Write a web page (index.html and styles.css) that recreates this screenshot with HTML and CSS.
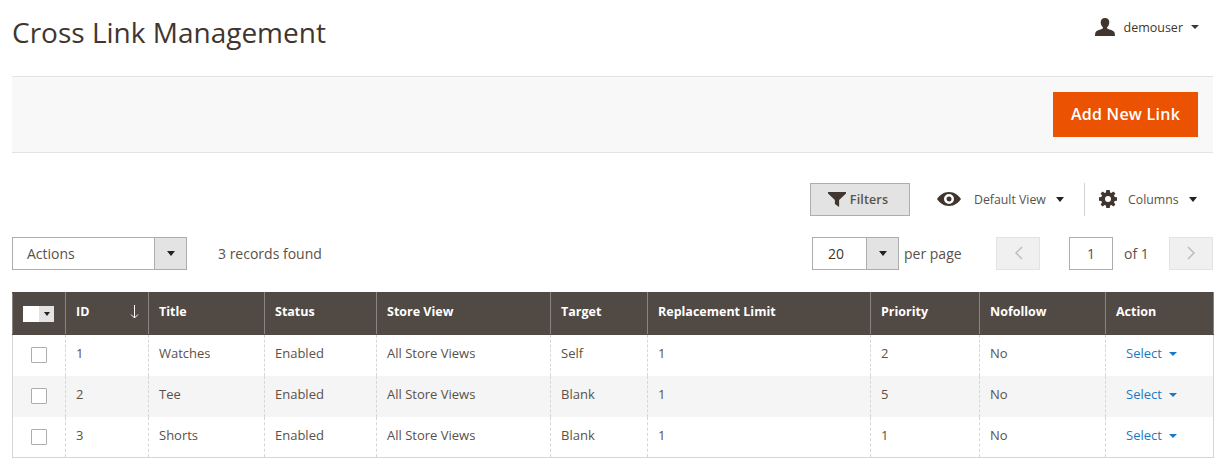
FILE: index.html
```html
<!DOCTYPE html>
<html lang="en">
<head>
<meta charset="utf-8">
<title>Cross Link Management</title>
<link rel="stylesheet" href="styles.css">
</head>
<body>
<div class="page">
  <header class="page-header">
    <h1 class="page-title">Cross Link Management</h1>
    <div class="user">
      <svg class="user-icon" width="20" height="18" viewBox="0 0 20 20" preserveAspectRatio="none"><path d="M10 0c2.900 0 4.300 2 4.300 4.800 0 2.200-.9 4.200-2 5.300-.4.500-.3 1.500.3 1.900 1.800 1 5.800 1.700 6.800 3.700.4.800.6 3.300.6 4.300H0c0-1 .2-3.500.6-4.300 1-2 5-2.700 6.800-3.700.6-.4.700-1.400.3-1.900-1.100-1.100-2-3.100-2-5.300C5.700 2 7.100 0 10 0z" fill="#41362f"/></svg>
      <span class="user-name">demouser</span>
      <span class="caret caret-dark"></span>
    </div>
  </header>
  <div class="action-bar">
    <button class="primary-btn">Add New Link</button>
  </div>
  <div class="toolbar">
    <button class="filters-btn">
      <svg width="18" height="15" viewBox="0 0 17 15" preserveAspectRatio="none"><path d="M0 0h17v1.500L10.500 8v7L6.500 12V8L0 1.500z" fill="#41362f"/></svg>
      Filters
    </button>
    <div class="tool view-tool">
      <svg width="24" height="14" viewBox="0 0 24 14"><path fill-rule="evenodd" d="M12 0c5.500 0 9.800 3.500 12 7-2.200 3.500-6.500 7-12 7S2.200 10.500 0 7c2.200-3.500 6.500-7 12-7zm0 2a5 5 0 1 0 0 10 5 5 0 0 0 0-10zm0 2.500a2.500 2.500 0 1 1 0 5 2.500 2.500 0 0 1 0-5z" fill="#41362f"/></svg>
      <span class="tool-label">Default View</span>
      <span class="caret caret-tool"></span>
    </div>
    <div class="tool columns-tool">
      <svg width="18" height="18" viewBox="0 0 18 18"><path fill-rule="evenodd" d="M7.300 0h3.400l.4 2.400 1.300.6L14.400 1.600l2 2-1.400 2 .6 1.300 2.400.4v3.400l-2.400.4-.6 1.300 1.400 2-2 2-2-1.400-1.300.6-.4 2.400H7.300l-.4-2.400-1.300-.6-2 1.400-2-2L3 12.400l-.6-1.300L0 10.700V7.300l2.400-.4L3 5.600l-1.400-2 2-2 2 1.400 1.300-.6zM9 6a3 3 0 1 0 0 6 3 3 0 0 0 0-6z" fill="#41362f"/></svg>
      <span class="tool-label">Columns</span>
      <span class="caret caret-tool"></span>
    </div>
  </div>
  <div class="pager-row">
    <div class="select actions-select">
      <span class="select-value">Actions</span>
      <span class="select-arrow"><span class="caret caret-tool"></span></span>
    </div>
    <span class="records">3 records found</span>
    <div class="pager">
      <div class="select page-size">
        <span class="select-value">20</span>
        <span class="select-arrow"><span class="caret caret-tool"></span></span>
      </div>
      <span class="per-page">per page</span>
      <span class="nav-btn"><svg width="9" height="14" viewBox="0 0 9 14"><path d="M8 1 2 7l6 6" fill="none" stroke="#bdbdbd" stroke-width="1.500"/></svg></span>
      <span class="page-input">1</span>
      <span class="of">of 1</span>
      <span class="nav-btn"><svg width="9" height="14" viewBox="0 0 9 14"><path d="M1 1l6 6-6 6" fill="none" stroke="#bdbdbd" stroke-width="1.500"/></svg></span>
    </div>
  </div>
  <table class="grid">
    <colgroup>
      <col class="c-check"><col class="c-id"><col class="c-title"><col class="c-status"><col class="c-store"><col class="c-target"><col class="c-limit"><col class="c-priority"><col class="c-nofollow"><col class="c-action">
    </colgroup>
    <thead>
      <tr>
        <th class="th-check"><span class="mass"><span class="mass-box"></span><span class="mass-arrow"><span class="caret caret-mini"></span></span></span></th>
        <th class="th-id">ID<svg class="sort" width="9" height="14" viewBox="0 0 9 14"><path d="M4.500 0v13M1 9.500l3.500 3.500L8 9.500" fill="none" stroke="#fff" stroke-width="1"/></svg></th>
        <th>Title</th>
        <th>Status</th>
        <th>Store View</th>
        <th>Target</th>
        <th>Replacement Limit</th>
        <th>Priority</th>
        <th>Nofollow</th>
        <th>Action</th>
      </tr>
    </thead>
    <tbody>
      <tr>
        <td class="td-check"><span class="checkbox"></span></td><td>1</td><td>Watches</td><td>Enabled</td><td>All Store Views</td><td>Self</td><td>1</td><td>2</td><td>No</td>
        <td class="td-action"><a class="select-link">Select<span class="caret caret-blue"></span></a></td>
      </tr>
      <tr class="alt">
        <td class="td-check"><span class="checkbox"></span></td><td>2</td><td>Tee</td><td>Enabled</td><td>All Store Views</td><td>Blank</td><td>1</td><td>5</td><td>No</td>
        <td class="td-action"><a class="select-link">Select<span class="caret caret-blue"></span></a></td>
      </tr>
      <tr>
        <td class="td-check"><span class="checkbox"></span></td><td>3</td><td>Shorts</td><td>Enabled</td><td>All Store Views</td><td>Blank</td><td>1</td><td>1</td><td>No</td>
        <td class="td-action"><a class="select-link">Select<span class="caret caret-blue"></span></a></td>
      </tr>
    </tbody>
  </table>
</div>
</body>
</html>
```

FILE: styles.css
```css
* { box-sizing: border-box; }
html, body { margin: 0; padding: 0; background: #fff; }
body { font-family: "Open Sans", "Liberation Sans", sans-serif; font-size: 14px; color: #41362f; overflow: hidden; }
.page { padding: 0 8px 0 12px; width: 1221px; }

.page-header { height: 76px; display: flex; justify-content: space-between; }
.page-title { margin: 13px 0 0; font-size: 28px; font-weight: 400; line-height: 38px; color: #41362f; }
.user { display: flex; align-items: center; height: 20px; margin: 17px 14px 0 0; }
.user-icon { margin-right: 8px; }
.user-name { font-size: 12.500px; color: #41362f; margin-right: 8px; }

.caret { display: inline-block; width: 0; height: 0; border-style: solid; border-width: 4.500px 4.500px 0; border-color: transparent; }
.caret-dark { border-top-color: #41362f; }
.caret-tool { border-width: 5px 4.500px 0; border-top-color: #222; }
.caret-blue { border-top-color: #1979c3; margin-left: 7px; vertical-align: 2px; }
.caret-mini { border-width: 4px 3.500px 0; border-top-color: #222; }

.action-bar { height: 77px; background: #f8f8f8; border-top: 1px solid #e3e3e3; border-bottom: 1px solid #e3e3e3; display: flex; justify-content: flex-end; align-items: flex-start; padding: 15px 15px 0 0; }
.primary-btn { width: 145px; height: 45px; border: 0; background: #eb5202; color: #fff; font: 600 16px "Open Sans", sans-serif; letter-spacing: .25px; padding: 0 0 2px; }

.toolbar { display: flex; align-items: center; height: 34px; margin-top: 29px; }
.filters-btn { margin-left: 798px; width: 100px; height: 33px; background: #e3e3e3; border: 1px solid #adadad; color: #5a5149; font: 600 12.500px "Open Sans", sans-serif; letter-spacing: .15px; display: flex; align-items: center; justify-content: center; gap: 4px; padding: 0 4px 0 0; }
.tool { display: flex; align-items: center; }
.view-tool { margin-left: 27px; width: 148px; height: 33px; border-right: 1px solid #d1d1d1; }
.view-tool .tool-label { margin-left: 13px; margin-right: 10px; }
.columns-tool { margin-left: 14px; }
.columns-tool .tool-label { margin-left: 11px; margin-right: 10px; }
.tool-label { font-size: 12.300px; color: #5a5149; }

.pager-row { display: flex; align-items: center; height: 34px; margin-top: 20px; }
.select { display: flex; height: 33px; background: #fff; border: 1px solid #adadad; }
.select-value { flex: 1; line-height: 31px; }
.select-arrow { width: 32px; background: #e3e3e3; border-left: 1px solid #adadad; display: flex; align-items: center; justify-content: center; }
.actions-select { width: 175px; }
.actions-select .select-value { padding-left: 14px; color: #5a5149; }
.records { margin-left: 31px; color: #5a5149; }
.pager { margin-left: auto; display: flex; align-items: center; }
.page-size { width: 87px; }
.page-size .select-value { padding-left: 15px; }
.per-page { margin-left: 5px; width: 92px; color: #5a5149; }
.nav-btn { width: 44px; height: 33px; background: #f0f0f0; border: 1px solid #e3e3e3; display: flex; align-items: center; justify-content: center; }
.page-input { margin-left: 29px; width: 44px; height: 33px; border: 1px solid #adadad; text-align: center; line-height: 31px; color: #5a5149; }
.of { margin-left: 11px; width: 45px; color: #5a5149; }

.grid { margin-top: 22px; width: 1201px; table-layout: fixed; border-collapse: collapse; font-size: 13px; }
.c-check { width: 53px; } .c-id { width: 83px; } .c-title { width: 116px; } .c-status { width: 112px; }
.c-store { width: 174px; } .c-target { width: 97px; } .c-limit { width: 223px; } .c-priority { width: 109px; }
.c-nofollow { width: 126px; } .c-action { width: 108px; }
.grid th { height: 42px; background: #514943; color: #fff; font-size: 12.500px; font-weight: 700; text-align: left; padding: 0 10px 5px; border: 1px solid #8a837f; border-top-color: #514943; border-bottom-color: #514943; position: relative; }
.grid .th-check { padding-bottom: 0; }
.grid td { height: 41px; padding: 0 10px 4px; color: #5a5149; border-left: 1px dashed #d6d6d6; border-right: 1px dashed #d6d6d6; }
.grid tr.alt td { background: #f5f5f5; }
.grid tbody tr:last-child td { border-bottom: 1px solid #d6d6d6; }
.grid td:first-child { border-left: 1px solid #d6d6d6; }
.grid td:last-child { border-right: 1px solid #d6d6d6; }
.sort { position: absolute; right: 9px; top: 12px; }
.mass { display: flex; width: 31px; height: 16px; }
.mass-box { width: 16px; background: #fff; }
.mass-arrow { width: 15px; background: #e3e3e3; display: flex; align-items: center; justify-content: center; }
.grid .td-check { padding-left: 18px; padding-bottom: 0; }
.checkbox { display: block; width: 16px; height: 16px; background: #fff; border: 1px solid #adadad; border-radius: 1px; }
.grid .td-action { padding-left: 20px; }
.select-link { color: #1979c3; }
```
